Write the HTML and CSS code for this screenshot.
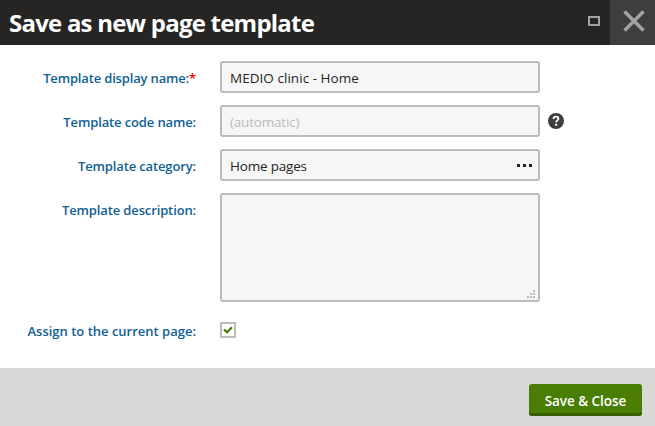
FILE: index.html
```html
<!DOCTYPE html>
<html lang="en">
<head>
<meta charset="utf-8">
<title>Save as new page template</title>
<link rel="stylesheet" href="styles.css">
</head>
<body>
<div class="dialog">
  <header class="header">
    <h1 class="title">Save as new page template</h1>
    <button class="maximize" aria-label="Maximize"><svg width="12" height="10" viewBox="0 0 12 10"><rect x="1" y="1" width="10" height="8" fill="none" stroke="#a3a2a2" stroke-width="2"/></svg></button>
    <button class="close" aria-label="Close"><svg width="22" height="22" viewBox="0 0 22 22"><path d="M1.5 1.5L20.5 20.5M20.5 1.5L1.5 20.5" stroke="#a3a2a2" stroke-width="3.5"/></svg></button>
  </header>
  <main class="form">
    <div class="row">
      <label class="label label-name" for="name">Template display name:<span class="required">*</span></label>
      <input class="control control-name" id="name" value="MEDIO clinic - Home">
    </div>
    <div class="row">
      <label class="label" for="code">Template code name:</label>
      <input class="control" id="code" placeholder="(automatic)">
      <svg class="help" width="16" height="16" viewBox="0 0 16 16"><circle cx="8" cy="8" r="8" fill="#403e3d"/><path d="M5.6 6V5.6C5.6 4.2 6.6 3.6 8 3.6S10.4 4.4 10.4 5.7C10.4 7.4 8.2 7.4 8.2 9.3" fill="none" stroke="#fff" stroke-width="1.9"/><rect x="7.1" y="10.7" width="2.1" height="2" fill="#fff"/></svg>
    </div>
    <div class="row">
      <label class="label">Template category:</label>
      <div class="control picker"><span>Home pages</span><svg width="15" height="3" viewBox="0 0 15 3"><path d="M0 0h3v3H0zM6 0h3v3H6zM12 0h3v3h-3z" fill="#262524"/></svg></div>
    </div>
    <div class="row row-area">
      <label class="label">Template description:</label>
      <div class="control area"><svg width="8" height="8" viewBox="0 0 8 8"><path d="M6 0h2v2H6zM3 3h2v2H3zM6 3h2v2H6zM0 6h2v2H0zM3 6h2v2H3zM6 6h2v2H6z" fill="#bdbbbb"/></svg></div>
    </div>
    <div class="row row-check">
      <label class="label label-assign">Assign to the current page:</label>
      <span class="checkbox"><svg width="10" height="8" viewBox="0 0 10 8"><path d="M1 3.6L4 6.2L9 1.2" fill="none" stroke="#497d04" stroke-width="2.2"/></svg></span>
    </div>
  </main>
  <footer class="footer"><button class="save">Save &amp; Close</button></footer>
</div>
</body>
</html>
```

FILE: styles.css
```css
* { box-sizing: border-box; }
body { margin: 0; background: #fff; font-family: "Open Sans", "Noto Sans", sans-serif; font-size: 14px; color: #262524; }
button { border: 0; padding: 0; font-family: inherit; }
svg { display: block; }
.dialog { width: 655px; height: 426px; display: flex; flex-direction: column; }
.header { height: 45px; flex: none; display: flex; background: #262524; }
.title { flex: 1; margin: 0; padding-left: 9px; color: #fff; font-size: 24px; line-height: 45px; font-weight: 700; letter-spacing: -0.78px; white-space: nowrap; }
.maximize, .close { display: flex; align-items: center; justify-content: center; background: none; }
.maximize { width: 32px; padding-bottom: 3px; }
.close { width: 45px; padding: 0 0 3px 3px; background: #403e3d; }
.form { flex: 1; padding-top: 16px; display: flex; flex-direction: column; gap: 12px; }
.row { display: flex; height: 32px; }
.row-area { height: 109px; }
.row-check { height: 34px; }
.label { width: 196px; margin-right: 24px; text-align: right; line-height: 34px; font-size: 13px; font-weight: 600; letter-spacing: -0.13px; color: #0f6194; white-space: nowrap; }
.label-name { letter-spacing: -0.16px; }
.label-assign { letter-spacing: 0; }
.required { color: #f00; }
.control { width: 320px; border: 2px solid #bdbbbb; border-radius: 3px; background: #f6f6f6; padding: 2px 8px 0; font: 13.5px/28px "Open Sans", "Noto Sans", sans-serif; letter-spacing: -0.2px; color: #262524; outline: 0; }
.control-name { letter-spacing: 0.04px; }
.control::placeholder { color: #bdbbbb; opacity: 1; }
.picker { display: flex; justify-content: space-between; padding: 1px 6px 0 8px; }
.picker svg { margin-top: 12px; }
.area { display: flex; align-items: flex-end; justify-content: flex-end; padding: 0 3px 2px; }
.help { margin: 8px 0 0 8px; }
.checkbox { width: 16px; height: 16px; margin-top: 8px; border: 2px solid #bdbbbb; display: flex; align-items: center; justify-content: center; }
.footer { height: 58px; flex: none; display: flex; justify-content: flex-end; padding: 16px 13px 0 0; background: #d6d9d6; }
.save { width: 113px; height: 32px; padding-top: 1px; border-radius: 3px; background: #497d04; box-shadow: inset 0 -3px #376100; color: #fff; font-size: 13.5px; font-weight: 600; letter-spacing: -0.05px; }
```
